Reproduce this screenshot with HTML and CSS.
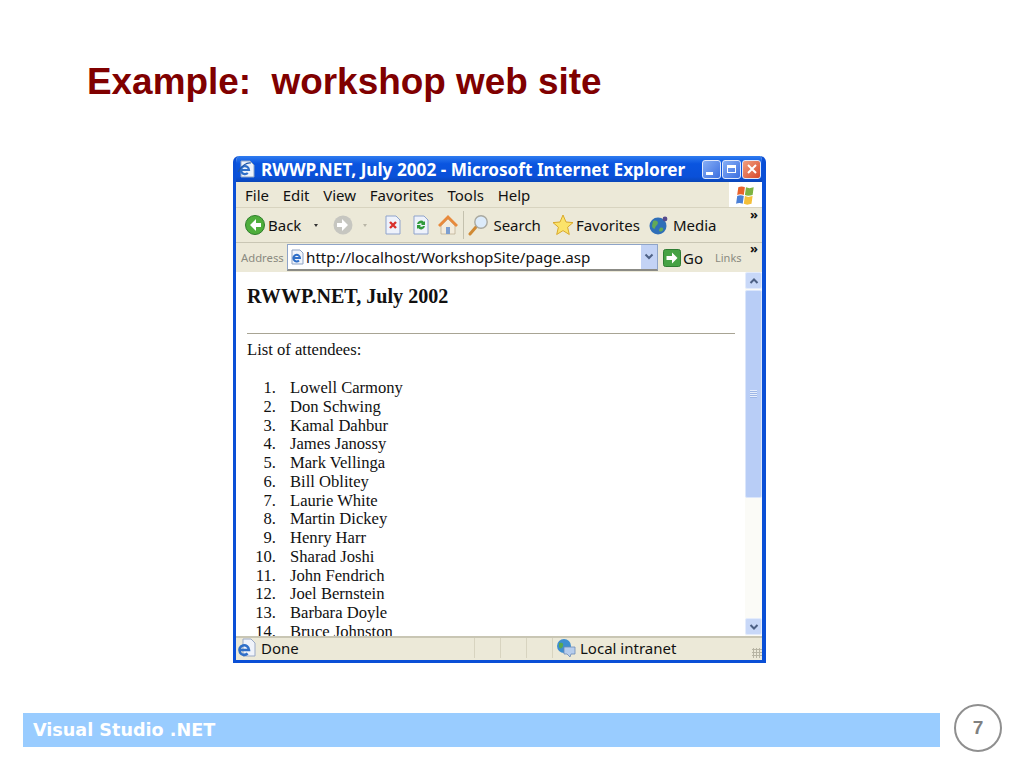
FILE: index.html
```html
<!DOCTYPE html>
<html lang="en">

<head>
    <meta charset="UTF-8">
    <title>Example: workshop web site</title>
    <link rel="stylesheet" href="styles.css">
</head>

<body>
    <h1 class="slide-title">Example:&nbsp; workshop web site</h1>

    <!-- Ventana del navegador -->
    <div class="window">
        <div class="titlebar">
            <svg class="ico18" viewBox="0 0 18 18">
                <path d="M4 1h9l4 4v12H4z" fill="#eef3fb" stroke="#8ea4c4"/>
                <path d="M4 10h8a4 4 0 1 0-1.200 3" fill="none" stroke="#2f6fc8" stroke-width="2.200"/>
                <path d="M1 12c3-6 9-10 13-9" fill="none" stroke="#1d56a8" stroke-width="1.200"/>
            </svg>
            <span class="title-text">RWWP.NET, July 2002 - Microsoft Internet Explorer</span>
            <div class="caption-btns">
                <span class="cap-btn"><i class="cap-min"></i></span>
                <span class="cap-btn"><i class="cap-max"></i></span>
                <span class="cap-btn cap-close">
                    <svg viewBox="0 0 12 12" width="12" height="12"><path d="M2 2l8 8M10 2l-8 8" stroke="#fff" stroke-width="2"/></svg>
                </span>
            </div>
        </div>

        <div class="menubar">
            <span>File</span><span>Edit</span><span>View</span><span>Favorites</span><span>Tools</span><span>Help</span>
            <div class="flag-box">
                <svg viewBox="0 0 20 20" width="22" height="22">
                    <path d="M3 3c2-1 4-1 6 0l-1 7c-2-1-4-1-6 0z" fill="#e8622c"/>
                    <path d="M10 3c2 1 4 1 7 0l-1 7c-3 1-5 1-7 0z" fill="#7cb342"/>
                    <path d="M2 11c2-1 4-1 6 0l-1 7c-2-1-4-1-6 0z" fill="#4a7fd6"/>
                    <path d="M9 11c2 1 4 1 7 0l-1 7c-3 1-5 1-7 0z" fill="#f4bf3a"/>
                </svg>
            </div>
        </div>

        <div class="toolbar">
            <svg class="ico22" viewBox="0 0 22 22">
                <circle cx="11" cy="11" r="9.500" fill="#4fae3c" stroke="#2e7d2a"/>
                <path d="M12 5l-6 6 6 6v-4h5V9h-5z" fill="#fff"/>
            </svg>
            <span class="tb-label">Back</span>
            <span class="tb-arrow"></span>
            <svg class="ico22" viewBox="0 0 22 22">
                <circle cx="11" cy="11" r="9.500" fill="#c6c6c0"/>
                <path d="M10 5l6 6-6 6v-4H5V9h5z" fill="#fff"/>
            </svg>
            <span class="tb-arrow tb-arrow-off"></span>
            <svg class="ico20" viewBox="0 0 20 20">
                <path d="M3 1h10l4 4v14H3z" fill="#eef2fb" stroke="#8fa3cc"/>
                <path d="M7 7l6 6M13 7l-6 6" stroke="#d9302c" stroke-width="2.400"/>
            </svg>
            <svg class="ico20 tb-refresh" viewBox="0 0 20 20">
                <path d="M3 1h10l4 4v14H3z" fill="#eef2fb" stroke="#8fa3cc"/>
                <path d="M6 9a4 4 0 0 1 7-2l1-1v4h-4l1-1a2 2 0 0 0-3 0zM14 11a4 4 0 0 1-7 2l-1 1v-4h4l-1 1a2 2 0 0 0 3 0z" fill="#2f9a3a"/>
            </svg>
            <svg class="ico22 tb-home" viewBox="0 0 22 22">
                <path d="M4 12l7-7 7 7v8H4z" fill="#f3ecdc" stroke="#b8a98c" stroke-width=".7"/>
                <path d="M11 1L1 11l2 2 8-8 8 8 2-2z" fill="#e88a3c"/>
                <rect x="9" y="13" width="4" height="7" fill="#7d9fd0"/>
            </svg>
            <span class="tb-sep"></span>
            <svg class="ico22" viewBox="0 0 22 22">
                <path d="M8 13l-6 7" stroke="#d08a34" stroke-width="3" stroke-linecap="round"/>
                <circle cx="13" cy="8" r="6.200" fill="#dcebfa" stroke="#a9a9a0" stroke-width="1.400"/>
            </svg>
            <span class="tb-label tb-search">Search</span>
            <svg class="ico22 tb-star" viewBox="0 0 22 22">
                <path d="M11 1l3 7 7 .6-5.400 4.600 1.700 7.300L11 16.600 4.700 20.500l1.700-7.300L1 8.600 8 8z" fill="#fbe36a" stroke="#d9a92a"/>
            </svg>
            <span class="tb-label">Favorites</span>
            <svg class="ico22 tb-media" viewBox="0 0 22 22">
                <circle cx="10" cy="12" r="8.500" fill="#2f6fb8"/>
                <path d="M5 7c3-1 5 0 5 2s-3 3-3 5-3 0-3-2zM12 14c2-1 4 0 3 2s-4 2-4 0z" fill="#63a956"/>
                <circle cx="17" cy="5" r="2.400" fill="#574a8c"/>
            </svg>
            <span class="tb-label tb-search">Media</span>
            <span class="chevrons">»</span>
        </div>

        <div class="addressbar">
            <span class="addr-label">Address</span>
            <div class="addr-box">
                <svg class="ico16" viewBox="0 0 16 16">
                    <path d="M3 1h8l3 3v11H3z" fill="#f2f5fb" stroke="#8fa3c4"/>
                    <path d="M4.500 9h6.500a3.300 3.300 0 1 0-1 2.500" fill="none" stroke="#2f6fc8" stroke-width="2"/>
                </svg>
                <span class="addr-url">http://localhost/WorkshopSite/page.asp</span>
                <span class="addr-drop">
                    <svg viewBox="0 0 10 8" width="10" height="8"><path d="M1.500 1.500L5 5l3.500-3.500" fill="none" stroke="#4d6185" stroke-width="2"/></svg>
                </span>
            </div>
            <svg class="ico18" viewBox="0 0 18 18">
                <rect x=".5" y=".5" width="17" height="17" rx="2" fill="#46a244" stroke="#2f7d33"/>
                <path d="M9 3.500L14.500 9 9 14.500V11H3.500V7H9z" fill="#fff"/>
            </svg>
            <span class="go-label">Go</span>
            <span class="links-label">Links</span>
            <span class="chevrons chevrons-links">»</span>
        </div>

        <div class="viewport">
            <div class="page">
                <h2 class="page-head">RWWP.NET, July 2002</h2>
                <hr class="page-rule">
                <p class="page-intro">List of attendees:</p>
                <ol class="attendees">
                    <li>Lowell Carmony</li>
                    <li>Don Schwing</li>
                    <li>Kamal Dahbur</li>
                    <li>James Janossy</li>
                    <li>Mark Vellinga</li>
                    <li>Bill Oblitey</li>
                    <li>Laurie White</li>
                    <li>Martin Dickey</li>
                    <li>Henry Harr</li>
                    <li>Sharad Joshi</li>
                    <li>John Fendrich</li>
                    <li>Joel Bernstein</li>
                    <li>Barbara Doyle</li>
                    <li>Bruce Johnston</li>
                </ol>
            </div>
            <div class="scrollbar">
                <span class="sb-btn">
                    <svg viewBox="0 0 10 8" width="10" height="8"><path d="M1.500 6L5 2.500 8.500 6" fill="none" stroke="#4d6185" stroke-width="2"/></svg>
                </span>
                <span class="sb-thumb"><i class="sb-grip"></i></span>
                <span class="sb-btn sb-btn-down">
                    <svg viewBox="0 0 10 8" width="10" height="8"><path d="M1.500 2L5 5.500 8.500 2" fill="none" stroke="#4d6185" stroke-width="2"/></svg>
                </span>
            </div>
        </div>

        <div class="statusbar">
            <svg class="ico20" viewBox="0 0 20 20">
                <path d="M7 1h8l4 4v13H7z" fill="#f0f3fa" stroke="#9aa9c6"/>
                <path d="M4 12h9a4.800 4.800 0 1 0-1.400 3.500" fill="none" stroke="#2f6fc8" stroke-width="2.600"/>
            </svg>
            <span class="status-text status-done">Done</span>
            <span class="status-cell status-cell-a"></span>
            <span class="status-cell"></span>
            <span class="status-cell"></span>
            <div class="status-zone">
                <svg class="ico20" viewBox="0 0 20 20">
                    <circle cx="8" cy="8" r="7" fill="#3d8ed0"/>
                    <path d="M3 5c3-1 5 0 4 3s-3 3-4 1zM10 10c2-1 3 1 2 3" fill="#5aa84f"/>
                    <path d="M8 9h11v7h-4l-1 3-3-3H8z" fill="#b7cdec" stroke="#6c8ab8" stroke-width=".8"/>
                </svg>
                <span class="status-text">Local intranet</span>
            </div>
            <span class="grip"></span>
        </div>
    </div>

    <!-- Pie de la diapositiva -->
    <div class="slide-footer">
        <div class="footer-bar">Visual Studio .NET</div>
        <div class="page-num">7</div>
    </div>
</body>

</html>
```

FILE: styles.css
```css
html,
body {
    margin: 0;
    padding: 0;
}

body {
    width: 1024px;
    height: 768px;
    overflow: hidden;
    background: #ffffff;
    font-family: "Liberation Sans", Arial, sans-serif;
}

.slide-title {
    margin: 0;
    padding: 61px 0 0 87px;
    height: 96px;
    box-sizing: border-box;
    font-size: 36.900px;
    line-height: 42px;
    font-weight: bold;
    color: #800000;
    white-space: nowrap;
}

/* Ventana */
.window {
    width: 533px;
    height: 507px;
    margin: 60px 0 0 233px;
    box-sizing: border-box;
    display: flex;
    flex-direction: column;
    background: #ece9d8;
    border: solid #0a4fd6;
    border-width: 0 4px 3px 3px;
    border-radius: 6px 6px 0 0;
    font-family: "Noto Sans", "DejaVu Sans", sans-serif;
    font-size: 15px;
    color: #111111;
    overflow: hidden;
}

.titlebar {
    height: 26px;
    flex: none;
    display: flex;
    align-items: center;
    padding: 0 1px;
    color: #ffffff;
    background: linear-gradient(#2f7cf0, #0a55e0 30%, #0a50d8 80%, #0a46b8);
}

.title-text {
    margin-left: 6px;
    padding-top: 1px;
    font-size: 17.200px;
    font-weight: bold;
    white-space: nowrap;
}

.caption-btns {
    margin-left: auto;
    display: flex;
    gap: 1px;
}

.cap-btn {
    width: 19px;
    height: 19px;
    box-sizing: border-box;
    display: flex;
    position: relative;
    align-items: center;
    justify-content: center;
    background: linear-gradient(135deg, #86aef5, #3c6fe0);
    border: 1px solid #dfe8fb;
    border-radius: 3px;
}

.cap-min {
    position: absolute;
    left: 3px;
    bottom: 3px;
    width: 7px;
    height: 3px;
    background: #ffffff;
}

.cap-max {
    width: 9px;
    height: 8px;
    box-sizing: border-box;
    border: 1px solid #ffffff;
    border-top-width: 3px;
}

.cap-close {
    background: linear-gradient(135deg, #f0a080, #d8482a);
}

.menubar {
    height: 26px;
    flex: none;
    display: flex;
    align-items: center;
    gap: 13.700px;
    padding-left: 9px;
    box-sizing: border-box;
    border-bottom: 1px solid #d8d4c0;
}

.flag-box {
    margin-left: auto;
    align-self: stretch;
    width: 33px;
    background: #ffffff;
    display: flex;
    align-items: center;
    justify-content: center;
}

.toolbar {
    height: 35px;
    flex: none;
    display: flex;
    align-items: center;
    padding-left: 8px;
    position: relative;
    box-sizing: border-box;
    border-bottom: 1px solid #c9c6b4;
}

.ico16 {
    width: 16px;
    height: 16px;
    flex: none;
}

.ico18 {
    width: 18px;
    height: 18px;
    flex: none;
}

.ico20 {
    width: 20px;
    height: 20px;
    flex: none;
}

.ico22 {
    width: 22px;
    height: 22px;
    flex: none;
}

.tb-label {
    margin-left: 2px;
}

.tb-search {
    margin-left: 3px;
}

.tb-arrow {
    width: 0;
    height: 0;
    margin: 0 14px 0 13px;
    border: 2.500px solid transparent;
    border-top: 3px solid #333333;
    border-bottom: 0;
}

.tb-arrow-off {
    border-top-color: #b8b5a6;
    margin: 0 16px 0 9px;
}

.tb-refresh {
    margin-left: 8px;
}

.tb-home {
    margin-left: 6px;
}

.tb-sep {
    width: 1px;
    height: 28px;
    margin: 0 4px 0 4px;
    background: #c4c1ae;
}

.tb-star {
    margin-left: 11px;
}

.tb-media {
    margin-left: 8px;
}

.chevrons {
    position: absolute;
    top: -1px;
    right: 4px;
    font-size: 13px;
    line-height: 14px;
    font-weight: bold;
}

.addressbar {
    height: 29px;
    flex: none;
    display: flex;
    align-items: center;
    position: relative;
    padding-left: 5px;
    box-sizing: border-box;
}

.addr-label {
    font-size: 11.300px;
    color: #8a8a80;
    width: 46px;
    flex: none;
}

.addr-box {
    width: 371px;
    height: 27px;
    flex: none;
    box-sizing: border-box;
    background: #ffffff;
    border: 1px solid #8ea4c8;
    border-bottom: 2px solid #8b8b85;
    display: flex;
    align-items: center;
    padding-left: 1px;
}

.addr-url {
    margin-left: 1px;
    font-size: 15.200px;
    white-space: nowrap;
}

.addr-drop {
    margin-left: auto;
    width: 16px;
    align-self: stretch;
    display: flex;
    align-items: center;
    justify-content: center;
    background: #c3d3f5;
}

.addressbar .ico18 {
    margin-left: 5px;
}

.go-label {
    margin-left: 2px;
}

.links-label {
    margin-left: 12px;
    font-size: 11px;
    color: #8a8a80;
}

.chevrons-links {
    top: -2px;
}

/* Contenido */
.viewport {
    flex: 1;
    min-height: 0;
    display: flex;
    background: #ffffff;
    overflow: hidden;
}

.page {
    flex: 1;
    min-width: 0;
    overflow: hidden;
    padding: 0 10px 0 11px;
    font-family: "Liberation Serif", "Times New Roman", serif;
    font-size: 16.600px;
    line-height: 18.750px;
    color: #111111;
}

.page-head {
    margin: 13px 0 0;
    font-size: 20.100px;
    line-height: 22px;
    font-weight: bold;
}

.page-rule {
    margin: 26px 0 0;
    height: 1px;
    border: 0;
    background: #a8a494;
}

.page-intro {
    margin: 7px 0 0;
    height: 38px;
}

.attendees {
    margin: 0;
    padding: 0;
    list-style: none;
    counter-reset: fila;
}

.attendees li {
    counter-increment: fila;
}

.attendees li::before {
    content: counter(fila) ".";
    display: inline-block;
    width: 29px;
    margin-right: 14px;
    text-align: right;
}

.scrollbar {
    width: 17px;
    flex: none;
    display: flex;
    flex-direction: column;
    box-sizing: border-box;
    background: #fbfbf7;
}

.sb-btn {
    height: 17px;
    flex: none;
    display: flex;
    align-items: center;
    justify-content: center;
    background: #c8d8f8;
    border: 1px solid #e4ecfc;
    box-sizing: border-box;
    border-radius: 2px;
}

.sb-thumb {
    height: 208px;
    margin-top: 1px;
    display: flex;
    align-items: center;
    justify-content: center;
    background: #b8cdf6;
    border: 1px solid #dbe6fb;
    box-sizing: border-box;
    border-radius: 2px;
}

.sb-grip {
    width: 7px;
    height: 8px;
    background: repeating-linear-gradient(#e6eefc 0 1px, #9db6e6 1px 2px);
}

.sb-btn-down {
    margin-top: auto;
    margin-bottom: 1px;
}

.statusbar {
    height: 24px;
    flex: none;
    display: flex;
    align-items: center;
    padding-bottom: 2px;
    box-sizing: border-box;
    border-top: 2px solid #c9c6b4;
}

.status-text {
    margin-left: 4px;
    white-space: nowrap;
}

.status-done {
    margin-left: 5px;
}

.status-cell {
    width: 26px;
    align-self: stretch;
    flex: none;
    box-sizing: border-box;
    border-left: 1px solid #d8d4c0;
}

.status-cell-a {
    margin-left: auto;
}

.status-zone {
    display: flex;
    align-items: center;
    align-self: stretch;
    width: 200px;
    box-sizing: border-box;
    padding-left: 3px;
    border-left: 1px solid #d8d4c0;
}

.grip {
    align-self: flex-end;
    width: 10px;
    height: 10px;
    flex: none;
    background: radial-gradient(circle, #b8b5a4 1px, transparent 1.200px) 0 0 / 3px 3px;
}

/* Pie */
.slide-footer {
    display: flex;
    align-items: center;
    margin: 45px 0 0 23px;
}

.footer-bar {
    width: 917px;
    height: 34px;
    box-sizing: border-box;
    padding-left: 10px;
    background: #99ccff;
    color: #ffffff;
    font-family: "DejaVu Sans", Verdana, sans-serif;
    font-size: 17.600px;
    line-height: 35px;
    font-weight: bold;
}

.page-num {
    width: 48px;
    height: 48px;
    margin: -4px 0 0 14px;
    box-sizing: border-box;
    border: 2.500px solid #8f8f8f;
    border-radius: 50%;
    color: #808080;
    font-family: "Liberation Sans", Arial, sans-serif;
    font-size: 19px;
    font-weight: bold;
    line-height: 43px;
    text-align: center;
}
```
